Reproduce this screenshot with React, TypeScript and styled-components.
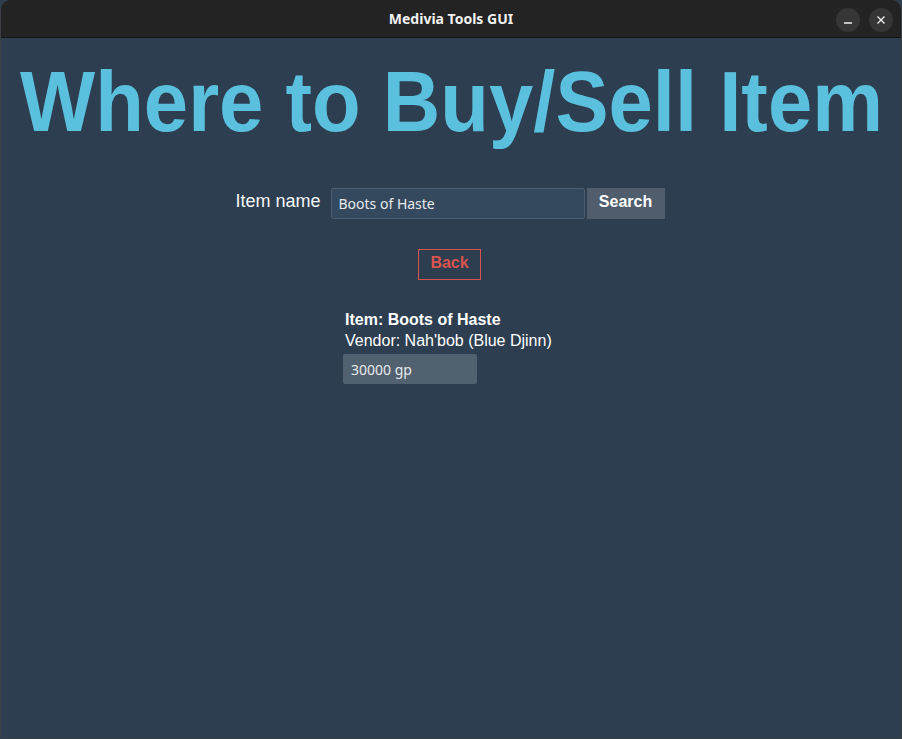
import React from "react";
import styled, { createGlobalStyle } from "styled-components";

const Global = createGlobalStyle`
  html, body { margin: 0; padding: 0; background: #2c3e50; }
  #root { width: 902px; height: 739px; }
`;

const Window = styled.div`
  width: 902px;
  height: 739px;
  box-sizing: border-box;
  display: flex;
  flex-direction: column;
  background: #2c3e50;
  border: 1px solid #3b3f44;
  border-top: none;
  border-radius: 10px 10px 0 0;
  overflow: hidden;
`;

const TitleBar = styled.div`
  height: 38px;
  flex: none;
  background: #232323;
  border-bottom: 1px solid #151515;
  box-sizing: border-box;
  position: relative;
  display: flex;
  align-items: center;
  justify-content: center;
  font-family: "Noto Sans", "DejaVu Sans", sans-serif;
  font-weight: 700;
  font-size: 14px;
  color: #f2f2f2;
`;

const Controls = styled.div`
  position: absolute;
  right: 8px;
  top: 8px;
  display: flex;
  gap: 9px;
`;

const CtrlButton = styled.div`
  width: 24px;
  height: 24px;
  border-radius: 50%;
  background: #363636;
  display: flex;
  align-items: center;
  justify-content: center;
`;

const Content = styled.div`
  flex: 1;
  display: flex;
  flex-direction: column;
  align-items: center;
  font-family: "Liberation Sans", Arial, sans-serif;
  color: #ecf0f1;
`;

const Heading = styled.h1`
  margin: 21px 0 0;
  font-size: 85px;
  line-height: 1;
  font-weight: 700;
  color: #5bc0de;
  white-space: nowrap;
  transform: scaleX(0.937);
`;

const SearchRow = styled.div`
  margin: 44px 2px 0 0;
  display: flex;
  align-items: center;
  gap: 2px;
`;

const Label = styled.label`
  font-size: 18px;
  color: #f4f6f7;
  margin-right: 8px;
  margin-top: -4px;
`;

const Input = styled.input`
  width: 254px;
  height: 31px;
  box-sizing: border-box;
  background: #34495e;
  border: 1px solid #4c5d6e;
  border-radius: 2px;
  color: #e6e9ec;
  font-family: "Noto Sans", "DejaVu Sans", sans-serif;
  font-size: 14px;
  padding: 0 7px;
  outline: none;
`;

const SearchButton = styled.button`
  width: 78px;
  height: 31px;
  box-sizing: border-box;
  background: #4f5d6c;
  border: none;
  color: #ffffff;
  font-family: "Liberation Sans", Arial, sans-serif;
  font-weight: 700;
  font-size: 16px;
  padding: 0 0 3px;
`;

const BackButton = styled.button`
  margin: 30px 3px 0 0;
  width: 63px;
  height: 31px;
  box-sizing: border-box;
  background: transparent;
  border: 1px solid #d9534f;
  color: #d9534f;
  font-family: "Liberation Sans", Arial, sans-serif;
  font-weight: 700;
  font-size: 16px;
  padding: 0 0 4px;
`;

const Info = styled.div`
  margin-top: 29px;
  width: 212px;
  margin-right: 4px;
  display: flex;
  flex-direction: column;
  align-items: flex-start;
`;

const InfoLine = styled.div<{ $bold?: boolean }>`
  font-size: 16px;
  line-height: 21px;
  padding-left: 2px;
  font-weight: ${(p) => (p.$bold ? 700 : 400)};
  color: #ffffff;
`;

const Price = styled.div`
  margin-top: 3px;
  width: 134px;
  height: 30px;
  box-sizing: border-box;
  background: #526170;
  border-radius: 2px;
  display: flex;
  align-items: center;
  padding: 0 8px;
  font-family: "Noto Sans", "DejaVu Sans", sans-serif;
  font-size: 14px;
  color: #e6e9ec;
`;

export default function App() {
  return (
    <>
      <Global />
      <Window>
        <TitleBar>
          Medivia Tools GUI
          <Controls>
            <CtrlButton>
              <svg width="10" height="10" viewBox="0 0 10 10">
                <line x1="1" y1="8" x2="9" y2="8" stroke="#f0f0f0" strokeWidth="1.3" />
              </svg>
            </CtrlButton>
            <CtrlButton>
              <svg width="10" height="10" viewBox="0 0 10 10">
                <path d="M1.5 1.5 L8.5 8.5 M8.5 1.5 L1.5 8.5" stroke="#f0f0f0" strokeWidth="1.3" />
              </svg>
            </CtrlButton>
          </Controls>
        </TitleBar>
        <Content>
          <Heading>Where to Buy/Sell Item</Heading>
          <SearchRow>
            <Label>Item name</Label>
            <Input defaultValue="Boots of Haste" />
            <SearchButton>Search</SearchButton>
          </SearchRow>
          <BackButton>Back</BackButton>
          <Info>
            <InfoLine $bold>Item: Boots of Haste</InfoLine>
            <InfoLine>Vendor: Nah'bob (Blue Djinn)</InfoLine>
            <Price>30000 gp</Price>
          </Info>
        </Content>
      </Window>
    </>
  );
}
